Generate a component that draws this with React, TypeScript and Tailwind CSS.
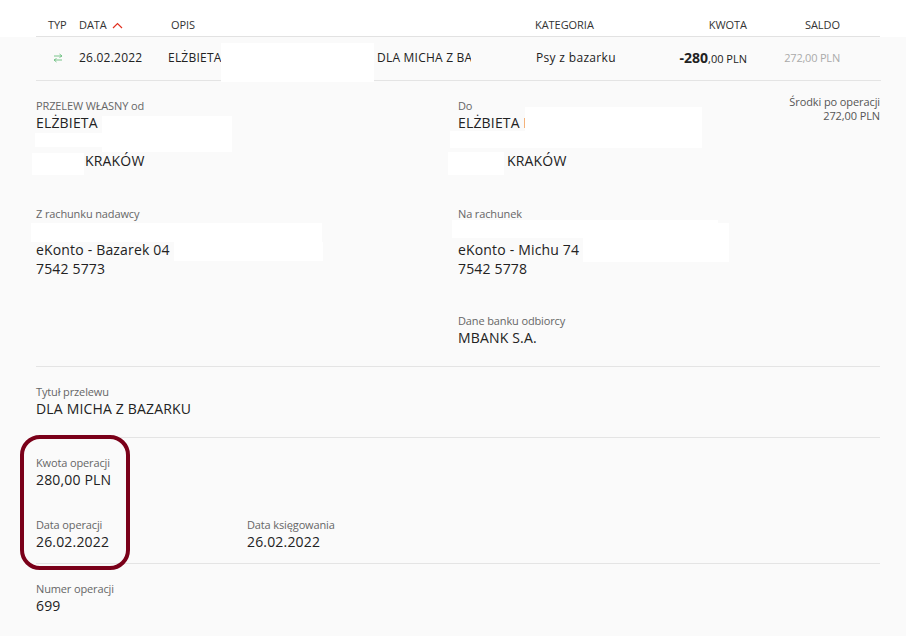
const Label = ({ children }: { children: React.ReactNode }) => (
  <div className="text-[11px] leading-[15px] tracking-[-0.13px] text-[#666666]">{children}</div>
);
const Value = ({ children }: { children: React.ReactNode }) => (
  <div className="text-sm leading-[20px] tracking-[0.17px] text-[#222222]">{children}</div>
);
const Patch = ({ c }: { c: string }) => <div className={`absolute bg-white ${c}`} />;

export default function App() {
  return (
    <div className="relative w-[906px] h-[636px] overflow-hidden bg-[#fafafa] font-['Open_Sans',sans-serif] text-[#222222]">
      <div className="bg-white h-[37px] pl-9 pr-[26px]">
        <div className="h-[37px] border-b border-[#e2e2e2] flex items-center pt-[14px] text-[11px] tracking-[-0.05px] text-[#333333] w-[844px]">
          <div className="w-[43px] pl-3">TYP</div>
          <div className="w-[92px] flex items-center gap-[5px]">
            DATA
            <svg width="11" height="7" viewBox="0 0 11 7" fill="none" stroke="#e03020" strokeWidth="1.2"><path d="M1 6 L5.5 1.5 L10 6" /></svg>
          </div>
          <div className="w-[364px]">OPIS</div>
          <div className="w-[122px]">KATEGORIA</div>
          <div className="w-[90px] text-right">KWOTA</div>
          <div className="w-[93px] text-right">SALDO</div>
        </div>
      </div>
      <div className="mx-9 h-[44px] pb-[2px] border-b border-[#e4e4e4] flex items-center text-xs tracking-[0.22px] text-[#222222] w-[845px]">
        <div className="w-[43px] pl-[17px]">
          <svg width="10" height="10" viewBox="0 0 10 10" fill="none" stroke="#6cc080" strokeWidth="0.9"><path d="M1 3 H9 M6.5 1 L9 3 L6.5 4.5 M9 7 H1 M3.5 5.5 L1 7 L3.5 9" /></svg>
        </div>
        <div className="w-[89px] whitespace-nowrap">26.02.2022</div>
        <div className="w-[303px] whitespace-nowrap overflow-hidden flex">
          <span className="w-[209px] shrink-0">ELŻBIETA</span>
          <span>DLA MICHA Z BAZARKU</span>
        </div>
        <div className="w-[65px] shrink-0" />
        <div className="w-[135px] whitespace-nowrap tracking-[0.32px]">Psy z bazarku</div>
        <div className="w-[76px] text-right whitespace-nowrap text-[11px] tracking-normal"><b className="text-sm font-bold">-280</b>,00 PLN</div>
        <div className="w-[93px] text-right text-[11px] tracking-[-0.2px] text-[#aaaaaa] pt-[1px]">272,00 PLN</div>
      </div>

      <div className="mx-9 w-[844px] h-[286px] border-b border-[#e4e4e4] relative grid grid-cols-[422px_1fr]">
        <div className="pt-[17px]">
          <Label>PRZELEW WŁASNY od</Label>
          <Value>ELŻBIETA</Value>
          <div className="pl-[49px] mt-[18px]"><Value>KRAKÓW</Value></div>
          <div className="mt-[35px]"><Label>Z rachunku nadawcy</Label></div>
          <div className="mt-[19px]"><Value>eKonto - Bazarek 04</Value><div className="-mt-px"><Value>7542 5773</Value></div></div>
        </div>
        <div className="pt-[17px]">
          <Label>Do</Label>
          <Value>ELŻBIETA <span className="inline-block w-px h-[10px] bg-[#f4b27a]" /></Value>
          <div className="pl-[49px] mt-[18px]"><Value>KRAKÓW</Value></div>
          <div className="mt-[35px]"><Label>Na rachunek</Label></div>
          <div className="mt-[19px]"><Value>eKonto - Michu 74</Value><div className="-mt-px"><Value>7542 5778</Value></div></div>
          <div className="mt-[34px]"><Label>Dane banku odbiorcy</Label><Value>MBANK S.A.</Value></div>
        </div>
        <div className="absolute right-0 top-[14px] text-right text-[11px] leading-[14px] tracking-[-0.1px] text-[#555555]">
          <div>Środki po operacji</div>
          <div>272,00 PLN</div>
        </div>
      </div>

      <div className="mx-9 w-[844px] h-[71px] border-b border-[#e4e4e4] pt-[17px]">
        <Label>Tytuł przelewu</Label>
        <Value>DLA MICHA Z BAZARKU</Value>
      </div>

      <div className="mx-9 w-[844px] h-[126px] border-b border-[#e4e4e4] pt-[17px]">
        <Label>Kwota operacji</Label>
        <Value>280,00 PLN</Value>
        <div className="grid grid-cols-[211px_1fr] mt-[27px]">
          <div><Label>Data operacji</Label><Value>26.02.2022</Value></div>
          <div><Label>Data księgowania</Label><Value>26.02.2022</Value></div>
        </div>
      </div>

      <div className="mx-9 w-[844px] pt-[17px]">
        <Label>Numer operacji</Label>
        <Value>699</Value>
      </div>

      <Patch c="left-[221px] top-[43px] w-[153px] h-[39px]" />
      <Patch c="left-[102px] top-[116px] w-[130px] h-[36px]" />
      <Patch c="left-[35px] top-[133px] w-[68px] h-[14px]" />
      <Patch c="left-[32px] top-[153px] w-[52px] h-[22px]" />
      <Patch c="left-[525px] top-[107px] w-[177px] h-[41px]" />
      <Patch c="left-[450px] top-[131px] w-[76px] h-[17px]" />
      <Patch c="left-[448px] top-[152px] w-[56px] h-[23px]" />
      <Patch c="left-[31px] top-[223px] w-[291px] h-[19px]" />
      <Patch c="left-[174px] top-[242px] w-[149px] h-[19px]" />
      <Patch c="left-[452px] top-[220px] w-[266px] h-[18px]" />
      <Patch c="left-[583px] top-[223px] w-[146px] h-[39px]" />
      <div className="absolute left-[20px] top-[435px] w-[110px] h-[135px] border-[4px] border-[#7a0019] rounded-[20px]" />
    </div>
  );
}
